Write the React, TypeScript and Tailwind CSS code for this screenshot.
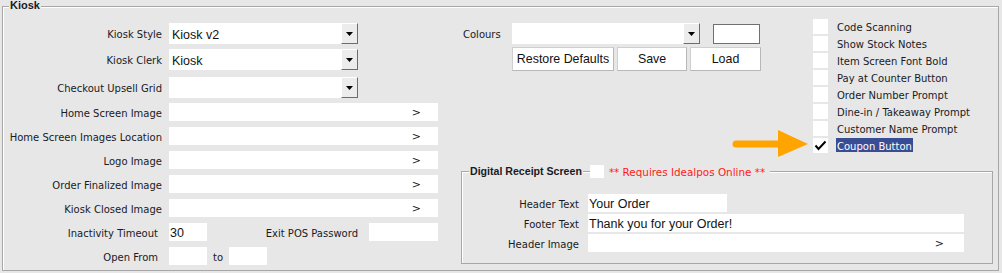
import React from "react";

const FILE_ROWS = [
  "Home Screen Image",
  "Home Screen Images Location",
  "Logo Image",
  "Order Finalized Image",
  "Kiosk Closed Image",
];

const OPTIONS = [
  { label: "Code Scanning", checked: false },
  { label: "Show Stock Notes", checked: false },
  { label: "Item Screen Font Bold", checked: false },
  { label: "Pay at Counter Button", checked: false },
  { label: "Order Number Prompt", checked: false },
  { label: "Dine-in / Takeaway Prompt", checked: false },
  { label: "Customer Name Prompt", checked: false },
  { label: "Coupon Button", checked: true },
];

const VALUE = "font-['Liberation_Sans',Arial,sans-serif] text-[12.5px] text-[#141414] pt-[3px]";

function DropButton() {
  return (
    <div className="w-[17px] h-full shrink-0 flex items-center justify-center bg-[#ececec] border border-t-white border-l-white border-r-[#6d6d6d] border-b-[#6d6d6d]">
      <svg width="7" height="4" viewBox="0 0 7 4">
        <path d="M0 0h7L3.5 4z" fill="#000" />
      </svg>
    </div>
  );
}

function Combo({ value, className }: { value?: string; className: string }) {
  return (
    <div className={`flex h-[21px] ${className}`}>
      <div className={`flex-1 bg-white flex items-center pl-[3px] ${VALUE}`}>{value}</div>
      <DropButton />
    </div>
  );
}

function FileField({ className }: { className: string }) {
  return (
    <div className={`h-[18px] bg-white flex items-center justify-end text-[11px] pt-[1px] ${className}`}>
      &gt;
    </div>
  );
}

function Row({
  label,
  className = "",
  labelClass = "w-[159px] mr-[7px]",
  children,
}: {
  label: string;
  className?: string;
  labelClass?: string;
  children: React.ReactNode;
}) {
  return (
    <div className={`flex items-center ${className}`}>
      <span className={`shrink-0 text-right pt-[3px] ${labelClass}`}>{label}</span>
      {children}
    </div>
  );
}

function Check({ checked }: { checked: boolean }) {
  return (
    <div className="w-[15px] h-[15px] bg-white shrink-0 flex items-center justify-center">
      {checked && (
        <svg width="13" height="11" viewBox="0 0 13 11">
          <path d="M1.5 5.5 4.5 9 11.5 1.5" fill="none" stroke="#000" strokeWidth="2" />
        </svg>
      )}
    </div>
  );
}

export default function App() {
  return (
    <div className="w-[1002px] h-[273px] bg-[#e7e7e7] pt-[6px] pl-[2px] font-['DejaVu_Sans',Verdana,sans-serif] text-[10px] text-[#1a1a24] leading-none">
      <div className="relative w-[997px] h-[265px] border border-[#a7a7a7] shadow-[inset_1px_1px_0_#fff] flex">
        <span className="absolute top-[-7px] left-[6px] px-[1px] bg-[#e7e7e7] font-['Liberation_Sans',Arial,sans-serif] font-bold text-[11px]">
          Kiosk
        </span>

        {/* left column */}
        <div className="w-[435px] flex flex-col">
          <Row label="Kiosk Style" className="mt-[16px]">
            <Combo value="Kiosk v2" className="w-[189px]" />
          </Row>
          <Row label="Kiosk Clerk" className="mt-[5px]">
            <Combo value="Kiosk" className="w-[189px]" />
          </Row>
          <Row label="Checkout Upsell Grid" className="mt-[7px]">
            <Combo className="w-[189px]" />
          </Row>
          {FILE_ROWS.map((label, i) => (
            <Row key={label} label={label} className={i === 0 ? "mt-[5px]" : "mt-[6px]"}>
              <FileField className="w-[269px] pr-[17px]" />
            </Row>
          ))}
          <Row label="Inactivity Timeout" className="mt-[6px]" labelClass="w-[155px] mr-[11px]">
            <div className={`w-[38px] h-[18px] bg-white flex items-center pl-[1px] ${VALUE}`}>30</div>
            <span className="ml-[52px] w-[99px] text-right shrink-0 pt-[3px]">Exit POS Password</span>
            <div className="ml-[11px] w-[69px] h-[18px] bg-white" />
          </Row>
          <Row label="Open From" className="mt-[6px]" labelClass="w-[155px] mr-[11px]">
            <div className="w-[38px] h-[18px] bg-white" />
            <span className="ml-[6px] w-[16px] pt-[3px]">to</span>
            <div className="w-[38px] h-[18px] bg-white" />
          </Row>
        </div>

        {/* right side */}
        <div className="flex-1 flex flex-col">
          <div className="flex items-start">
            <div className="ml-[25px] pt-[16px] flex flex-col">
              <div className="flex items-center">
                <span className="w-[49px] pt-[3px]">Colours</span>
                <Combo className="w-[188px]" />
                <div className="ml-[13px] w-[47px] h-[20px] bg-white border border-[#707070]" />
              </div>
              <div className="ml-[49px] mt-[3px] flex gap-[3px] font-['Liberation_Sans',Arial,sans-serif] text-[12.4px] text-[#111]">
                {[
                  { t: "Restore Defaults", w: "w-[102px]" },
                  { t: "Save", w: "w-[70px]" },
                  { t: "Load", w: "w-[71px]" },
                ].map((b) => (
                  <div
                    key={b.t}
                    className={`${b.w} h-[24px] bg-white border border-[#cfcfcf] border-r-[#b8b8b8] border-b-[#b8b8b8] flex items-center justify-center pt-[1px]`}
                  >
                    {b.t}
                  </div>
                ))}
              </div>
            </div>
            <div className="ml-[52px] pt-[12px] flex flex-col">
              {OPTIONS.map((o) => (
                <div key={o.label} className="h-[17px] flex items-start">
                  <Check checked={o.checked} />
                  <span
                    className={`h-[14px] flex items-center pt-[3px] ${
                      o.checked ? "bg-[#394d94] text-white px-[1px] ml-[8px]" : "ml-[9px]"
                    }`}
                  >
                    {o.label}
                  </span>
                </div>
              ))}
            </div>
          </div>

          {/* digital receipt frame */}
          <div className="relative ml-[23px] mt-[16px] w-[532px] h-[93px] border border-[#a7a7a7] shadow-[inset_1px_1px_0_#fff] flex flex-col pt-[22px] gap-[2px]">
            <div className="absolute top-[-7px] left-[7px] flex items-center">
              <span className="bg-[#e7e7e7] px-[1px] font-['Liberation_Sans',Arial,sans-serif] font-bold text-[10.6px]">
                Digital Receipt Screen
              </span>
              <div className="ml-[7px] w-[14px] h-[13px] bg-white" />
              <span className="bg-[#e7e7e7] pl-[5px] pr-[5px] pt-[2px] text-[#ff1a1a] text-[10.4px]">
                ** Requires Idealpos Online **
              </span>
            </div>
            <Row label="Header Text" labelClass="w-[117px] mr-[9px]">
              <div className={`w-[139px] h-[18px] bg-white flex items-center pl-[1px] ${VALUE}`}>Your Order</div>
            </Row>
            <Row label="Footer Text" labelClass="w-[117px] mr-[9px]">
              <div className={`w-[376px] h-[18px] bg-white flex items-center pl-[1px] ${VALUE}`}>
                Thank you for your Order!
              </div>
            </Row>
            <Row label="Header Image" labelClass="w-[117px] mr-[9px]">
              <FileField className="w-[376px] pr-[20px]" />
            </Row>
          </div>
        </div>

        {/* annotation arrow */}
        <svg
          className="absolute left-[729px] top-[123px]"
          width="77"
          height="28"
          viewBox="0 0 77 28"
        >
          <line x1="4" y1="14" x2="50" y2="14" stroke="#ffa400" strokeWidth="7" strokeLinecap="round" />
          <path d="M46 0 76 14 46 27z" fill="#ffa400" />
        </svg>
      </div>
    </div>
  );
}
